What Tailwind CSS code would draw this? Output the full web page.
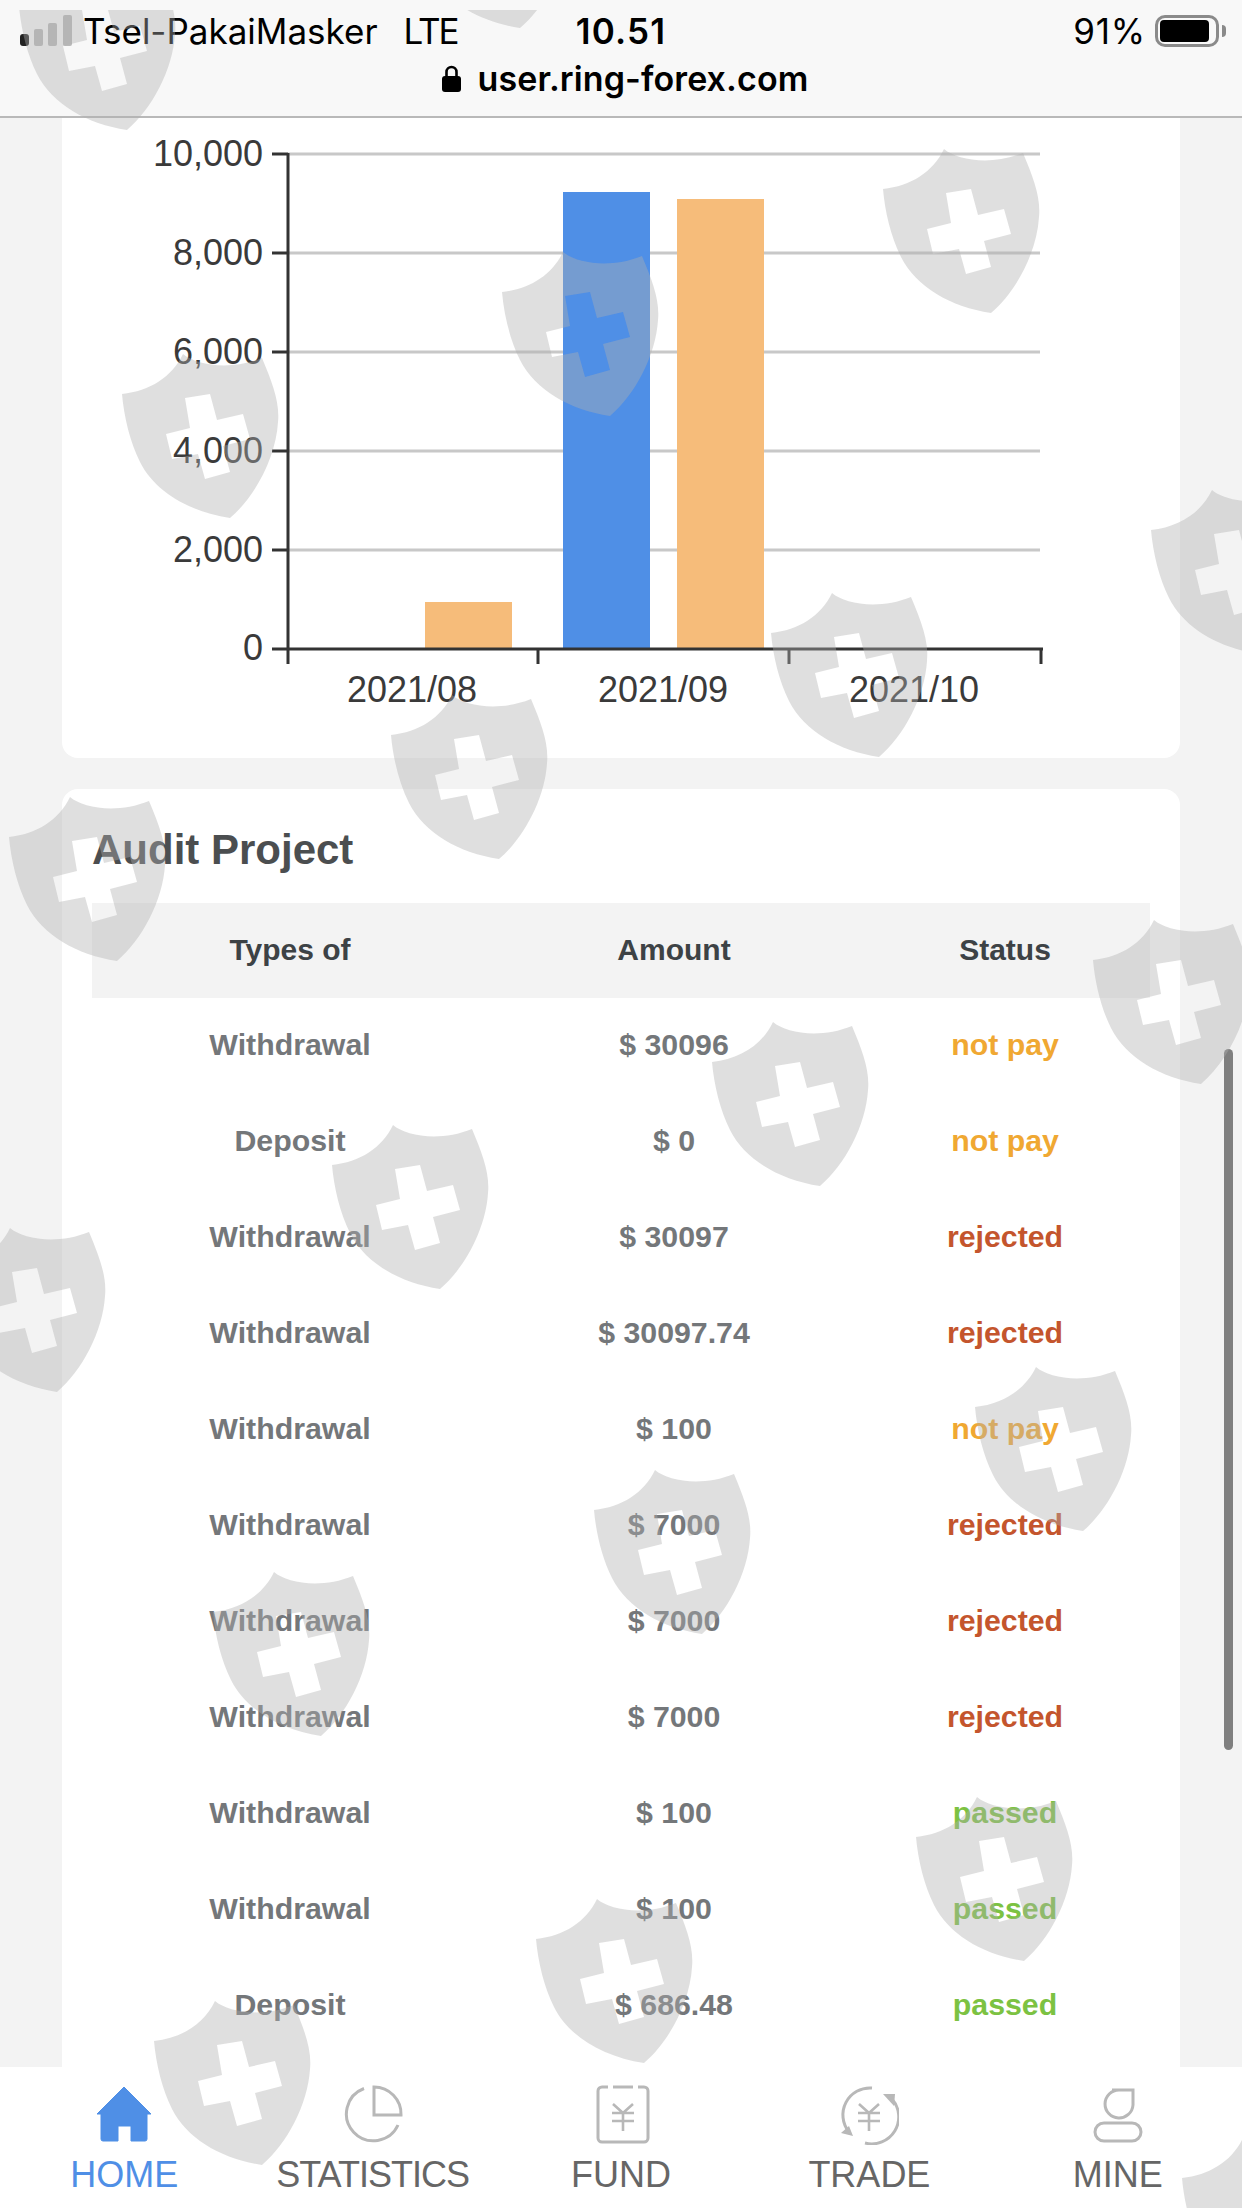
<!DOCTYPE html>
<html lang="en">
<head>
  <meta charset="UTF-8">
  <meta name="viewport" content="width=device-width, initial-scale=1.0">
  <title>Audit Project</title>
  <script src="https://cdn.jsdelivr.net/npm/@tailwindcss/browser@4"></script>
</head>
<body class="bg-[#f3f3f3] font-['Liberation_Sans',sans-serif]">
<div class="relative w-[1242px] h-[2208px] overflow-hidden flex flex-col">

  <!-- Status bar + address -->
  <header class="h-[118px] shrink-0 bg-[#f8f8f8] border-b-2 border-[#b9b9b9] text-black">
    <div class="grid grid-cols-[1fr_auto_1fr] items-center h-[62px] px-[16px]">
      <div class="flex items-center text-[35px] font-['Inter',sans-serif]">
        <svg class="w-[52px] h-[32px] ml-[4px] mr-[11px]" viewBox="0 0 52 32">
          <rect x="0" y="19" width="9" height="12" rx="3" fill="#222"/>
          <rect x="14" y="14" width="9" height="17" rx="2" fill="#b9b9b9"/>
          <rect x="28" y="8" width="9" height="23" rx="2" fill="#b9b9b9"/>
          <rect x="43" y="0" width="9" height="31" rx="2" fill="#b9b9b9"/>
        </svg>
        <span>Tsel-PakaiMasker</span>
        <span class="ml-[26px] tracking-[-2px]">LTE</span>
      </div>
      <div class="text-[35px] font-semibold font-['Inter',sans-serif] tracking-[1.2px]">10.51</div>
      <div class="flex items-center justify-end gap-[9px] text-[35px] font-['Inter',sans-serif]">
        <span class="tracking-[0.8px]">91%</span>
        <div class="flex items-center gap-[3px]">
          <div class="w-[64px] h-[32px] border-[3px] border-[#8a8a8a] rounded-[10px] p-[2px]">
            <div class="w-[49px] h-full bg-black rounded-[4px]"></div>
          </div>
          <div class="w-[4px] h-[12px] bg-[#8a8a8a] rounded-r-full"></div>
        </div>
      </div>
    </div>
    <div class="flex items-center justify-center gap-[17px] h-[32px] pl-[8px]">
      <svg class="w-[19px] h-[27px]" viewBox="0 0 19 27">
        <path d="M4.5 12V7a5 5 0 0 1 10 0v5" fill="none" stroke="#000" stroke-width="2.6"/>
        <rect x="0" y="11" width="19" height="16" rx="3" fill="#000"/>
      </svg>
      <span class="text-[34px] font-semibold font-['Inter',sans-serif] tracking-[0.1px]">user.ring-forex.com</span>
    </div>
  </header>

  <main class="flex-1 min-h-0 overflow-hidden px-[62px] flex flex-col gap-[31px]">
    <!-- Chart card -->
    <section class="bg-white rounded-b-[16px] h-[640px] shrink-0">
      <svg class="block" width="1118" height="640" viewBox="62 118 1118 640">
        <g stroke="#c8c8c8" stroke-width="3">
          <line x1="288" y1="154" x2="1040" y2="154"/>
          <line x1="288" y1="253" x2="1040" y2="253"/>
          <line x1="288" y1="352" x2="1040" y2="352"/>
          <line x1="288" y1="451" x2="1040" y2="451"/>
          <line x1="288" y1="550" x2="1040" y2="550"/>
        </g>
        <rect x="425" y="602" width="87" height="47" fill="#f6bc7a"/>
        <rect x="563" y="192" width="87" height="457" fill="#4f8fe6"/>
        <rect x="677" y="199" width="87" height="450" fill="#f6bc7a"/>
        <g stroke="#333" stroke-width="3">
          <line x1="288" y1="153" x2="288" y2="664"/>
          <line x1="272" y1="649" x2="1043" y2="649"/>
          <line x1="272" y1="154" x2="288" y2="154"/>
          <line x1="272" y1="253" x2="288" y2="253"/>
          <line x1="272" y1="352" x2="288" y2="352"/>
          <line x1="272" y1="451" x2="288" y2="451"/>
          <line x1="272" y1="550" x2="288" y2="550"/>
          <line x1="538" y1="649" x2="538" y2="664"/>
          <line x1="789" y1="649" x2="789" y2="664"/>
          <line x1="1041" y1="649" x2="1041" y2="664"/>
        </g>
        <g class="text-[36px]" fill="#3a3a3a" text-anchor="end">
          <text x="263" y="166">10,000</text>
          <text x="263" y="265">8,000</text>
          <text x="263" y="364">6,000</text>
          <text x="263" y="463">4,000</text>
          <text x="263" y="562">2,000</text>
          <text x="263" y="660">0</text>
        </g>
        <g class="text-[36px]" fill="#3a3a3a" text-anchor="middle">
          <text x="412" y="702">2021/08</text>
          <text x="663" y="702">2021/09</text>
          <text x="914" y="702">2021/10</text>
        </g>
      </svg>
    </section>

    <!-- Audit table -->
    <section class="bg-white rounded-t-[16px] px-[30px] flex-1 min-h-0">
      <h2 class="h-[114px] pt-[37px] text-[42px] leading-[48px] font-bold text-[#4b4e50]">Audit Project</h2>
      <div class="grid grid-cols-[396px_372px_290px] h-[95px] pb-[2px] items-center text-center text-[30px] font-bold bg-[#f3f3f3] text-[#3d4245]">
        <div>Types of</div><div>Amount</div><div>Status</div>
      </div>
      <div class="-mt-[1px] text-[30.3px] font-bold text-center text-[#74777a]">
        <div class="grid grid-cols-[396px_372px_290px] h-[96px] items-center"><div>Withdrawal</div><div>$ 30096</div><div class="text-[#f0a832]">not pay</div></div>
        <div class="grid grid-cols-[396px_372px_290px] h-[96px] items-center"><div>Deposit</div><div>$ 0</div><div class="text-[#f0a832]">not pay</div></div>
        <div class="grid grid-cols-[396px_372px_290px] h-[96px] items-center"><div>Withdrawal</div><div>$ 30097</div><div class="text-[#c4552d]">rejected</div></div>
        <div class="grid grid-cols-[396px_372px_290px] h-[96px] items-center"><div>Withdrawal</div><div>$ 30097.74</div><div class="text-[#c4552d]">rejected</div></div>
        <div class="grid grid-cols-[396px_372px_290px] h-[96px] items-center"><div>Withdrawal</div><div>$ 100</div><div class="text-[#f0a832]">not pay</div></div>
        <div class="grid grid-cols-[396px_372px_290px] h-[96px] items-center"><div>Withdrawal</div><div>$ 7000</div><div class="text-[#c4552d]">rejected</div></div>
        <div class="grid grid-cols-[396px_372px_290px] h-[96px] items-center"><div>Withdrawal</div><div>$ 7000</div><div class="text-[#c4552d]">rejected</div></div>
        <div class="grid grid-cols-[396px_372px_290px] h-[96px] items-center"><div>Withdrawal</div><div>$ 7000</div><div class="text-[#c4552d]">rejected</div></div>
        <div class="grid grid-cols-[396px_372px_290px] h-[96px] items-center"><div>Withdrawal</div><div>$ 100</div><div class="text-[#7cc242]">passed</div></div>
        <div class="grid grid-cols-[396px_372px_290px] h-[96px] items-center"><div>Withdrawal</div><div>$ 100</div><div class="text-[#7cc242]">passed</div></div>
        <div class="grid grid-cols-[396px_372px_290px] h-[96px] items-center"><div>Deposit</div><div>$ 686.48</div><div class="text-[#7cc242]">passed</div></div>
      </div>
    </section>
  </main>

  <!-- Tab bar -->
  <nav class="h-[141px] shrink-0 bg-white grid grid-cols-5 pt-[18px] text-[36px] leading-[40px] text-center text-[#666]">
    <a class="flex flex-col items-center gap-[10px] text-[#4f8fe6]">
      <svg class="w-[60px] h-[60px]" viewBox="0 0 60 60" fill="#4f8fe6">
        <path d="M30 2 57 29H53V54a2 2 0 0 1-2 2H37V41H24V56H9a2 2 0 0 1-2-2V29H3Z" stroke="#4f8fe6" stroke-width="1" stroke-linejoin="round"/>
      </svg>
      <span>HOME</span>
    </a>
    <a class="flex flex-col items-center gap-[10px]">
      <svg class="w-[60px] h-[60px]" viewBox="0 0 60 60" fill="none" stroke="#b8b8b8" stroke-width="3">
        <path d="M21 3.5A27 27 0 1 0 55 40"/>
        <path d="M31 2V30H58A27 27 0 0 0 31 2Z"/>
      </svg>
      <span class="tracking-[-1px]">STATISTICS</span>
    </a>
    <a class="flex flex-col items-center gap-[10px]">
      <svg class="w-[60px] h-[60px] translate-x-[2px]" viewBox="0 0 60 60" fill="none" stroke="#b8b8b8" stroke-width="3">
        <path d="M15 2H9A4 4 0 0 0 5 6V53A4 4 0 0 0 9 57H51A4 4 0 0 0 55 53V6A4 4 0 0 0 51 2H45"/>
        <path d="M20 2H40"/>
        <path d="M20 19 30 28 40 19M19 28H41M19 36H41M30 28V46" stroke-width="2.6"/>
      </svg>
      <span>FUND</span>
    </a>
    <a class="flex flex-col items-center gap-[10px]">
      <svg class="w-[60px] h-[60px]" viewBox="0 0 60 60" fill="none" stroke="#b8b8b8" stroke-width="3">
        <path d="M33 3A27 27 0 0 0 10 47"/>
        <path d="M53 14A27 27 0 0 1 26 58"/>
        <path d="M2 48 14 51 10 41Z" fill="#b8b8b8" stroke="none"/>
        <path d="M44 9H56L55 21Z" fill="#b8b8b8" stroke="none"/>
        <path d="M20 19 30 28 40 19M19 28H41M19 36H41M30 28V46" stroke-width="2.6"/>
      </svg>
      <span>TRADE</span>
    </a>
    <a class="flex flex-col items-center gap-[10px]">
      <svg class="w-[60px] h-[60px]" viewBox="0 0 60 60" fill="none" stroke="#b8b8b8" stroke-width="3">
        <path d="M24 5H45V20A14 14 0 1 1 31 5H24Z"/>
        <rect x="7" y="38" width="46" height="18" rx="9"/>
      </svg>
      <span>MINE</span>
    </a>
  </nav>

  <!-- Scrollbar -->
  <div class="absolute left-[1224px] top-[1049px] w-[9px] h-[701px] rounded-full bg-[#7f7f7f]"></div>

  <!-- Watermark shields over the whole page -->
  <svg class="absolute left-0 top-[10px] pointer-events-none" width="1242" height="2198" viewBox="0 10 1242 2198">
    <defs>
      <path id="shield" fill="#afafaf" fill-opacity=".4" fill-rule="evenodd" d="M-78-43C-50-46-28-60-17-83-4-72 30-66 62-79 72-55 80-35 78-15 76 20 55 60 30 81-10 75-45 55-60 25-70 5-76-20-78-43ZM-15-39 10-43 17-17 43-23 50 2 23 9 30 35 5 42-2 17-28 22-34-3-10-9Z"/>
    </defs>
    <use href="#shield" x="97" y="49"/>
    <use href="#shield" x="490" y="-53"/>
    <use href="#shield" x="961" y="232"/>
    <use href="#shield" x="580" y="335"/>
    <use href="#shield" x="200" y="437"/>
    <use href="#shield" x="1229" y="573"/>
    <use href="#shield" x="849" y="676"/>
    <use href="#shield" x="469" y="778"/>
    <use href="#shield" x="87" y="880"/>
    <use href="#shield" x="1171" y="1003"/>
    <use href="#shield" x="790" y="1105"/>
    <use href="#shield" x="410" y="1208"/>
    <use href="#shield" x="27" y="1311"/>
    <use href="#shield" x="1053" y="1450"/>
    <use href="#shield" x="672" y="1553"/>
    <use href="#shield" x="291" y="1655"/>
    <use href="#shield" x="994" y="1880"/>
    <use href="#shield" x="614" y="1982"/>
    <use href="#shield" x="232" y="2084"/>
    <use href="#shield" x="1260" y="2221"/>
  </svg>
</div>
</body>
</html>
